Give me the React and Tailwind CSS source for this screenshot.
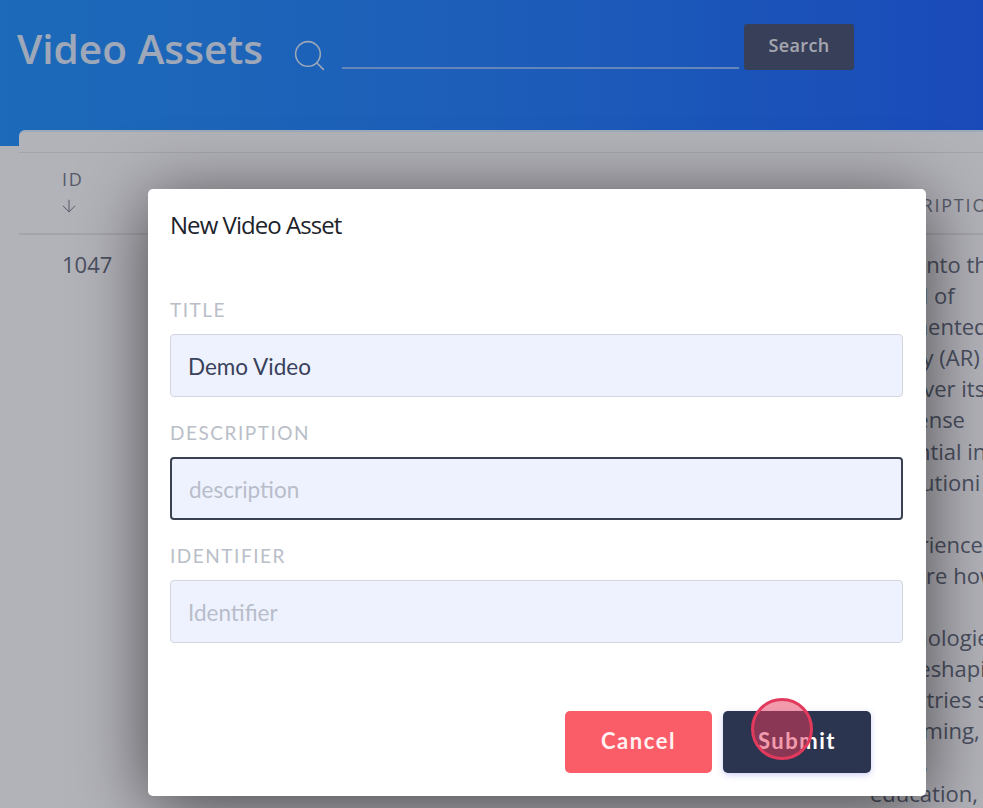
import React from "react";
import { Search, ArrowDown } from "lucide-react";

const descriptionLines = [
  "Dive into the", "world of", "augmented", "reality (AR)", "discover its", "immense", "potential in", "revolutioni", "\u00a0",
  "experience", "explore how", "\u00a0", "technologies", "are reshaping", "industries s", "as gaming,", "retail,", "education,",
];

function Field({ label, placeholder, value, focused }) {
  return (
    <div className="flex flex-col">
      <label className="font-['Lato',sans-serif] text-[19px] leading-[24px] tracking-[0.08em] uppercase text-[#b9bec8] h-[24px] mb-[12px]">
        {label}
      </label>
      <input
        readOnly
        value={value}
        placeholder={placeholder}
        className={`w-full h-[63px] rounded-[4px] bg-[#eef2fe] px-[17px] pt-[1px] font-['Lato',sans-serif] text-[22.5px] text-[#39415c] placeholder:text-[#b8bdca] outline-none ${
          focused ? "border-[2px] border-[#3a4252]" : "border border-[#d3d6df]"
        }`}
      />
    </div>
  );
}

export default function App() {
  return (
    <div className="relative w-[983px] h-[808px] overflow-hidden bg-white font-['Open_Sans',sans-serif]">
      <header className="h-[146px] flex items-start pl-[17px] bg-gradient-to-r from-[#2898ff] via-[#2a86ff] to-[#256aff]">
        <h1 className="mt-[24px] font-['Open_Sans',sans-serif] text-[40.6px] leading-[50px] font-semibold text-[#e2f0ff] whitespace-nowrap">
          Video Assets
        </h1>
        <Search className="ml-[28px] mt-[37px] w-[37px] h-[37px] text-[#e2f0ff]" strokeWidth={1} />
        <div className="ml-[14px] mt-[67px] w-[397px] h-[2px] bg-[#8fc0ff]" />
        <button className="ml-[5px] mt-[24px] w-[110px] h-[46px] pb-[4px] rounded-[3px] bg-[#4f5a75] text-white/90 font-['Open_Sans',sans-serif] font-semibold text-[18px] tracking-[0.02em]">
          Search
        </button>
      </header>

      <main className="ml-[19px] -mt-[16px] h-[700px] rounded-tl-[6px] bg-white border-t-[2px] border-[#e0f4ff] text-[#6b7280] overflow-hidden">
        <div className="h-[21px] border-b border-[#ebebeb]" />
        <div className="h-[82px] flex items-start border-b-[2px] border-[#ebebeb]">
          <div className="ml-[43px] mt-[13px] flex flex-col text-[18px] leading-[26px] tracking-[0.1em] text-[#7d828c]">
            <span>ID</span>
            <ArrowDown className="w-[20px] h-[20px] mt-[4px] -ml-[3px]" strokeWidth={1.2} />
          </div>
          <div className="ml-auto w-[113px] mt-[39px] text-[18px] leading-[26px] tracking-[0.1em] text-[#7d828c] whitespace-nowrap">
            DESCRIPTION
          </div>
        </div>
        <div className="flex items-start pt-[14px]">
          <div className="ml-[43px] text-[22px] leading-[31px] text-[#6b7280]">1047</div>
          <div className="ml-auto w-[113px] text-[22px] leading-[31.1px] whitespace-nowrap text-[#6b7280]">
            {descriptionLines.map((l, i) => (
              <div key={i}>{l}</div>
            ))}
          </div>
        </div>
      </main>

      <div className="absolute inset-0 bg-[#000018]/30" />

      <div className="absolute left-[148px] top-[189px] w-[778px] h-[607px] rounded-[5px] bg-white shadow-[0_10px_70px_rgba(0,0,0,0.6)] px-[22px] flex flex-col">
        <h2 className="mt-[20px] h-[32px] text-[24px] leading-[32px] tracking-[-0.04em] text-[#20232b] font-['Open_Sans',sans-serif]">
          New Video Asset
        </h2>
        <div className="mt-[57px] flex flex-col gap-[24px] w-[733px]">
          <Field label="Title" value="Demo Video" />
          <Field label="Description" placeholder="description" focused />
          <Field label="Identifier" placeholder="Identifier" />
        </div>
        <div className="mt-auto mb-[23px] flex justify-end gap-[11px] pr-[33px]">
          <button className="w-[147px] h-[62px] pb-[3px] rounded-[5px] bg-[#fb5d68] text-[#fff1f1] font-['Lato',sans-serif] font-bold text-[22px] tracking-[0.07em]">
            Cancel
          </button>
          <button className="w-[148px] h-[62px] pb-[3px] rounded-[5px] bg-[#2c3550] text-white font-['Lato',sans-serif] font-bold text-[22px] tracking-[0.07em] shadow-[0_2px_6px_rgba(90,100,240,0.3)]">
            Submit
          </button>
        </div>
      </div>

      <div className="absolute left-[751px] top-[698px] w-[62px] h-[62px] rounded-full border-[3px] border-[#e23a5c] bg-[#e8375a]/50" />
    </div>
  );
}
